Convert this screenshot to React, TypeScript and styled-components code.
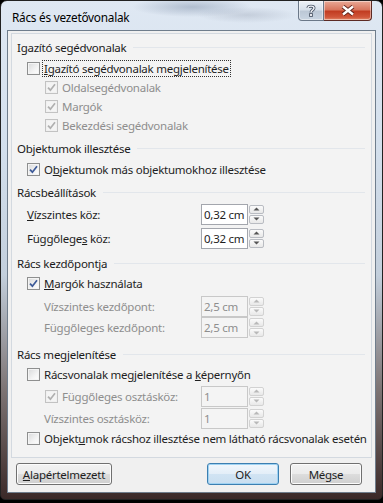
import React from "react";
import styled, { createGlobalStyle } from "styled-components";

const GlobalStyle = createGlobalStyle`
  html, body {
    margin: 0;
    padding: 0;
    background: #000;
  }
  body {
    font-family: "Noto Sans", "DejaVu Sans", sans-serif;
    font-size: 11.5px;
    letter-spacing: -0.25px;
    color: #1e1e1e;
  }
`;

const Window = styled.div`
  width: 383px;
  height: 500px;
  box-sizing: border-box;
  border: 1px solid #222;
  border-radius: 7px 7px 5px 5px;
  background: linear-gradient(
    180deg,
    #dfe8f3 0%,
    #d3dfec 30%,
    #c3cfdc 55%,
    #7d7474 78%,
    #3b2928 100%
  );
  padding: 0 6px 6px 6px;
  display: flex;
  flex-direction: column;
`;

const TitleBar = styled.div`
  height: 29px;
  display: flex;
  align-items: flex-start;
  background: radial-gradient(ellipse 60px 10px at 185px 6px, rgba(90, 110, 140, 0.35), transparent),
    radial-gradient(ellipse 50px 8px at 240px 14px, rgba(120, 130, 150, 0.25), transparent);
`;

const Title = styled.span`
  padding: 8px 0 0 5px;
  font-size: 11.8px;
  color: #000;
  flex: 1;
  white-space: nowrap;
`;

const CaptionButtons = styled.div`
  display: flex;
  margin-right: 4px;
`;

const CaptionButton = styled.div<{ $close?: boolean }>`
  width: ${(p) => (p.$close ? "48px" : "26px")};
  height: 20px;
  box-sizing: border-box;
  display: flex;
  align-items: center;
  justify-content: center;
  border: 1px solid ${(p) => (p.$close ? "#5c2a24" : "#6b7888")};
  border-top: none;
  border-radius: ${(p) => (p.$close ? "0 0 4px 0" : "0 0 0 4px")};
  border-left: ${(p) => (p.$close ? "none" : "1px solid #6b7888")};
  background: ${(p) =>
    p.$close
      ? "linear-gradient(180deg, #e9a996 0%, #d8775f 45%, #c23d22 55%, #d0563a 85%, #e38a6a 100%)"
      : "linear-gradient(180deg, #eef2f7 0%, #d7e0ea 45%, #bcc8d6 55%, #c9d5e2 100%)"};
  box-shadow: inset 0 0 0 1px rgba(255, 255, 255, 0.45);
`;

const Content = styled.div`
  flex: 1;
  border: 1px solid #6f7d8c;
  background: #f0f0f0;
  padding: 2px 3px 0 3px;
  display: flex;
  flex-direction: column;
`;

const Panel = styled.div`
  height: 425px;
  box-sizing: border-box;
  border: 1px solid #d3d9e0;
  background: #f3f3f3;
  padding: 0 0 0 5px;
  display: flex;
  flex-direction: column;
`;

const Header = styled.div<{ $mt: number }>`
  height: 18px;
  margin-top: ${(p) => p.$mt}px;
  display: flex;
  align-items: center;
  gap: 7px;
  color: #1a1a1a;
  white-space: nowrap;
  &::after {
    content: "";
    flex: 1;
    height: 1px;
    background: #e2e6eb;
    margin-right: 6px;
  }
`;

const CheckRow = styled.div<{ $indent: number; $mt?: number; $disabled?: boolean }>`
  height: 19px;
  margin-top: ${(p) => p.$mt ?? 0}px;
  padding-left: ${(p) => p.$indent}px;
  display: flex;
  align-items: center;
  gap: 2px;
  color: ${(p) => (p.$disabled ? "#8e8e8e" : "#1e1e1e")};
`;

const Box = styled.span<{ $disabled?: boolean }>`
  width: 13px;
  height: 13px;
  box-sizing: border-box;
  border: 1px solid ${(p) => (p.$disabled ? "#c2c2c2" : "#8e8f8f")};
  background: ${(p) =>
    p.$disabled ? "#f4f4f4" : "linear-gradient(135deg, #d8d9da 0%, #f3f3f3 60%, #ffffff 100%)"};
  box-shadow: inset 0 0 0 1px ${(p) => (p.$disabled ? "#f0f0f0" : "#f4f4f4")};
  display: flex;
  align-items: center;
  justify-content: center;
  flex-shrink: 0;
`;

const Label = styled.span<{ $focus?: boolean }>`
  padding: 0 1px;
  line-height: 15px;
  border: 1px ${(p) => (p.$focus ? "dotted #333" : "solid transparent")};
  white-space: nowrap;
`;

const U = styled.span`
  text-decoration: underline;
`;

const FieldRow = styled.div<{ $h: number; $mt?: number; $disabled?: boolean }>`
  height: ${(p) => p.$h}px;
  margin-top: ${(p) => p.$mt ?? 0}px;
  display: grid;
  grid-template-columns: 184px 63px;
  align-items: center;
  color: ${(p) => (p.$disabled ? "#8e8e8e" : "#1e1e1e")};
`;

const FieldLabel = styled.div<{ $indent: number }>`
  padding-left: ${(p) => p.$indent}px;
  display: flex;
  align-items: center;
  gap: 2px;
  white-space: nowrap;
`;

const Spin = styled.div`
  display: flex;
  gap: 1px;
  height: 21px;
`;

const TextBox = styled.div<{ $disabled?: boolean }>`
  width: 47px;
  box-sizing: border-box;
  border: 1px solid ${(p) => (p.$disabled ? "#c8c8c8" : "#a3a6ad")};
  background: ${(p) => (p.$disabled ? "#f4f4f4" : "#fff")};
  color: ${(p) => (p.$disabled ? "#8e8e8e" : "#1e1e1e")};
  padding-left: 2px;
  display: flex;
  align-items: center;
  white-space: nowrap;
  overflow: hidden;
`;

const Arrows = styled.div`
  width: 15px;
  display: flex;
  flex-direction: column;
  gap: 1px;
  padding: 1px 0;
  box-sizing: border-box;
`;

const Arrow = styled.div<{ $disabled?: boolean }>`
  flex: 1;
  border: 1px solid ${(p) => (p.$disabled ? "#d2d2d2" : "#b9bcc2")};
  border-radius: 2px;
  background: linear-gradient(180deg, #fbfbfb, #e8e8e8);
  display: flex;
  align-items: center;
  justify-content: center;
`;

const Buttons = styled.div`
  display: flex;
  margin-top: 5px;
  padding: 0 5px 0 5px;
  gap: 11px;
`;

const Button = styled.div<{ $w: number; $default?: boolean; $ml?: number }>`
  width: ${(p) => p.$w}px;
  height: 22px;
  box-sizing: border-box;
  margin-left: ${(p) => p.$ml ?? 0}px;
  border: 1px solid ${(p) => (p.$default ? "#3c7fb1" : "#707070")};
  border-radius: 3px;
  background: ${(p) =>
    p.$default
      ? "linear-gradient(180deg, #f1f7fc 0%, #e3eef8 50%, #d1e4f3 51%, #c9def0 100%)"
      : "linear-gradient(180deg, #f2f2f2 0%, #ebebeb 50%, #dddddd 51%, #cfcfcf 100%)"};
  box-shadow: inset 0 0 0 1px ${(p) => (p.$default ? "#9fd2f2" : "#fcfcfc")};
  display: flex;
  align-items: center;
  justify-content: center;
  color: #1e1e1e;
  white-space: nowrap;
`;

function Check({ checked, disabled }: { checked?: boolean; disabled?: boolean }) {
  return (
    <Box $disabled={disabled}>
      {checked && (
        <svg width="9" height="9" viewBox="0 0 9 9">
          <path
            d="M1 4.6 L3.4 7.2 L8 1.2"
            fill="none"
            stroke={disabled ? "#b0b0b0" : "#3d5a98"}
            strokeWidth="1.7"
          />
        </svg>
      )}
    </Box>
  );
}

function SpinBox({ value, disabled }: { value: string; disabled?: boolean }) {
  const c = disabled ? "#b8b8b8" : "#555";
  return (
    <Spin>
      <TextBox $disabled={disabled}>{value}</TextBox>
      <Arrows>
        <Arrow $disabled={disabled}>
          <svg width="7" height="4" viewBox="0 0 7 4">
            <path d="M0.5 3.5 L3.5 0.5 L6.5 3.5 Z" fill={c} />
          </svg>
        </Arrow>
        <Arrow $disabled={disabled}>
          <svg width="7" height="4" viewBox="0 0 7 4">
            <path d="M0.5 0.5 L3.5 3.5 L6.5 0.5 Z" fill={c} />
          </svg>
        </Arrow>
      </Arrows>
    </Spin>
  );
}

export default function App() {
  return (
    <>
      <GlobalStyle />
      <Window>
        <TitleBar>
          <Title>Rács és vezetővonalak</Title>
          <CaptionButtons>
            <CaptionButton>
              <svg width="10" height="13" viewBox="0 0 10 13">
                <path
                  d="M2 4 C2 1.5 8 1.5 8 4 C8 6 5 6 5 8.5"
                  fill="none"
                  stroke="#4a5566"
                  strokeWidth="3"
                />
                <path
                  d="M2 4 C2 1.5 8 1.5 8 4 C8 6 5 6 5 8.5"
                  fill="none"
                  stroke="#f4f6f9"
                  strokeWidth="1.4"
                />
                <rect x="3.6" y="9.6" width="2.8" height="2.8" fill="#f4f6f9" stroke="#4a5566" strokeWidth="0.9" />
              </svg>
            </CaptionButton>
            <CaptionButton $close>
              <svg width="14" height="11" viewBox="0 0 14 11">
                <path d="M2 1.5 L12 9.5 M12 1.5 L2 9.5" stroke="#5a2018" strokeWidth="4.2" />
                <path d="M2 1.5 L12 9.5 M12 1.5 L2 9.5" stroke="#ffffff" strokeWidth="2.4" />
              </svg>
            </CaptionButton>
          </CaptionButtons>
        </TitleBar>
        <Content>
          <Panel>
            <Header $mt={4}>Igazító segédvonalak</Header>
            <CheckRow $indent={10} $mt={3}>
              <Check />
              <Label $focus>
                <U>I</U>gazító segédvonalak megjelenítése
              </Label>
            </CheckRow>
            <CheckRow $indent={28} $disabled>
              <Check checked disabled />
              <Label>Oldalsegédvonalak</Label>
            </CheckRow>
            <CheckRow $indent={28} $disabled>
              <Check checked disabled />
              <Label>Margók</Label>
            </CheckRow>
            <CheckRow $indent={28} $disabled>
              <Check checked disabled />
              <Label>Bekezdési segédvonalak</Label>
            </CheckRow>

            <Header $mt={4}>Objektumok illesztése</Header>
            <CheckRow $indent={10} $mt={3}>
              <Check checked />
              <Label>
                O<U>b</U>jektumok más objektumokhoz illesztése
              </Label>
            </CheckRow>

            <Header $mt={4}>Rácsbeállítások</Header>
            <FieldRow $h={24} $mt={1}>
              <FieldLabel $indent={10}>
                <span>
                  <U>V</U>ízszintes köz:
                </span>
              </FieldLabel>
              <SpinBox value="0,32 cm" />
            </FieldRow>
            <FieldRow $h={24}>
              <FieldLabel $indent={10}>
                <span>
                  Függőlege<U>s</U> köz:
                </span>
              </FieldLabel>
              <SpinBox value="0,32 cm" />
            </FieldRow>

            <Header $mt={4}>Rács kezdőpontja</Header>
            <CheckRow $indent={10} $mt={2}>
              <Check checked />
              <Label>
                <U>M</U>argók használata
              </Label>
            </CheckRow>
            <FieldRow $h={22} $mt={2} $disabled>
              <FieldLabel $indent={27}>Vízszintes kezdőpont:</FieldLabel>
              <SpinBox value="2,5 cm" disabled />
            </FieldRow>
            <FieldRow $h={21} $disabled>
              <FieldLabel $indent={27}>Függőleges kezdőpont:</FieldLabel>
              <SpinBox value="2,5 cm" disabled />
            </FieldRow>

            <Header $mt={7}>Rács megjelenítése</Header>
            <CheckRow $indent={10} $mt={2}>
              <Check />
              <Label>
                Rácsvonalak megjelenítése a <U>k</U>épernyőn
              </Label>
            </CheckRow>
            <FieldRow $h={22} $mt={1} $disabled>
              <FieldLabel $indent={28}>
                <Check checked disabled />
                <Label>Függőleges osztásköz:</Label>
              </FieldLabel>
              <SpinBox value="1" disabled />
            </FieldRow>
            <FieldRow $h={22} $disabled>
              <FieldLabel $indent={27}>Vízszintes osztásköz:</FieldLabel>
              <SpinBox value="1" disabled />
            </FieldRow>
            <CheckRow $indent={10}>
              <Check />
              <Label>
                Objekt<U>u</U>mok rácshoz illesztése nem látható rácsvonalak esetén
              </Label>
            </CheckRow>
          </Panel>
          <Buttons>
            <Button $w={96}>
              <span>
                <U>A</U>lapértelmezett
              </span>
            </Button>
            <Button $w={72} $default $ml={84}>
              OK
            </Button>
            <Button $w={72}>Mégse</Button>
          </Buttons>
        </Content>
      </Window>
    </>
  );
}
